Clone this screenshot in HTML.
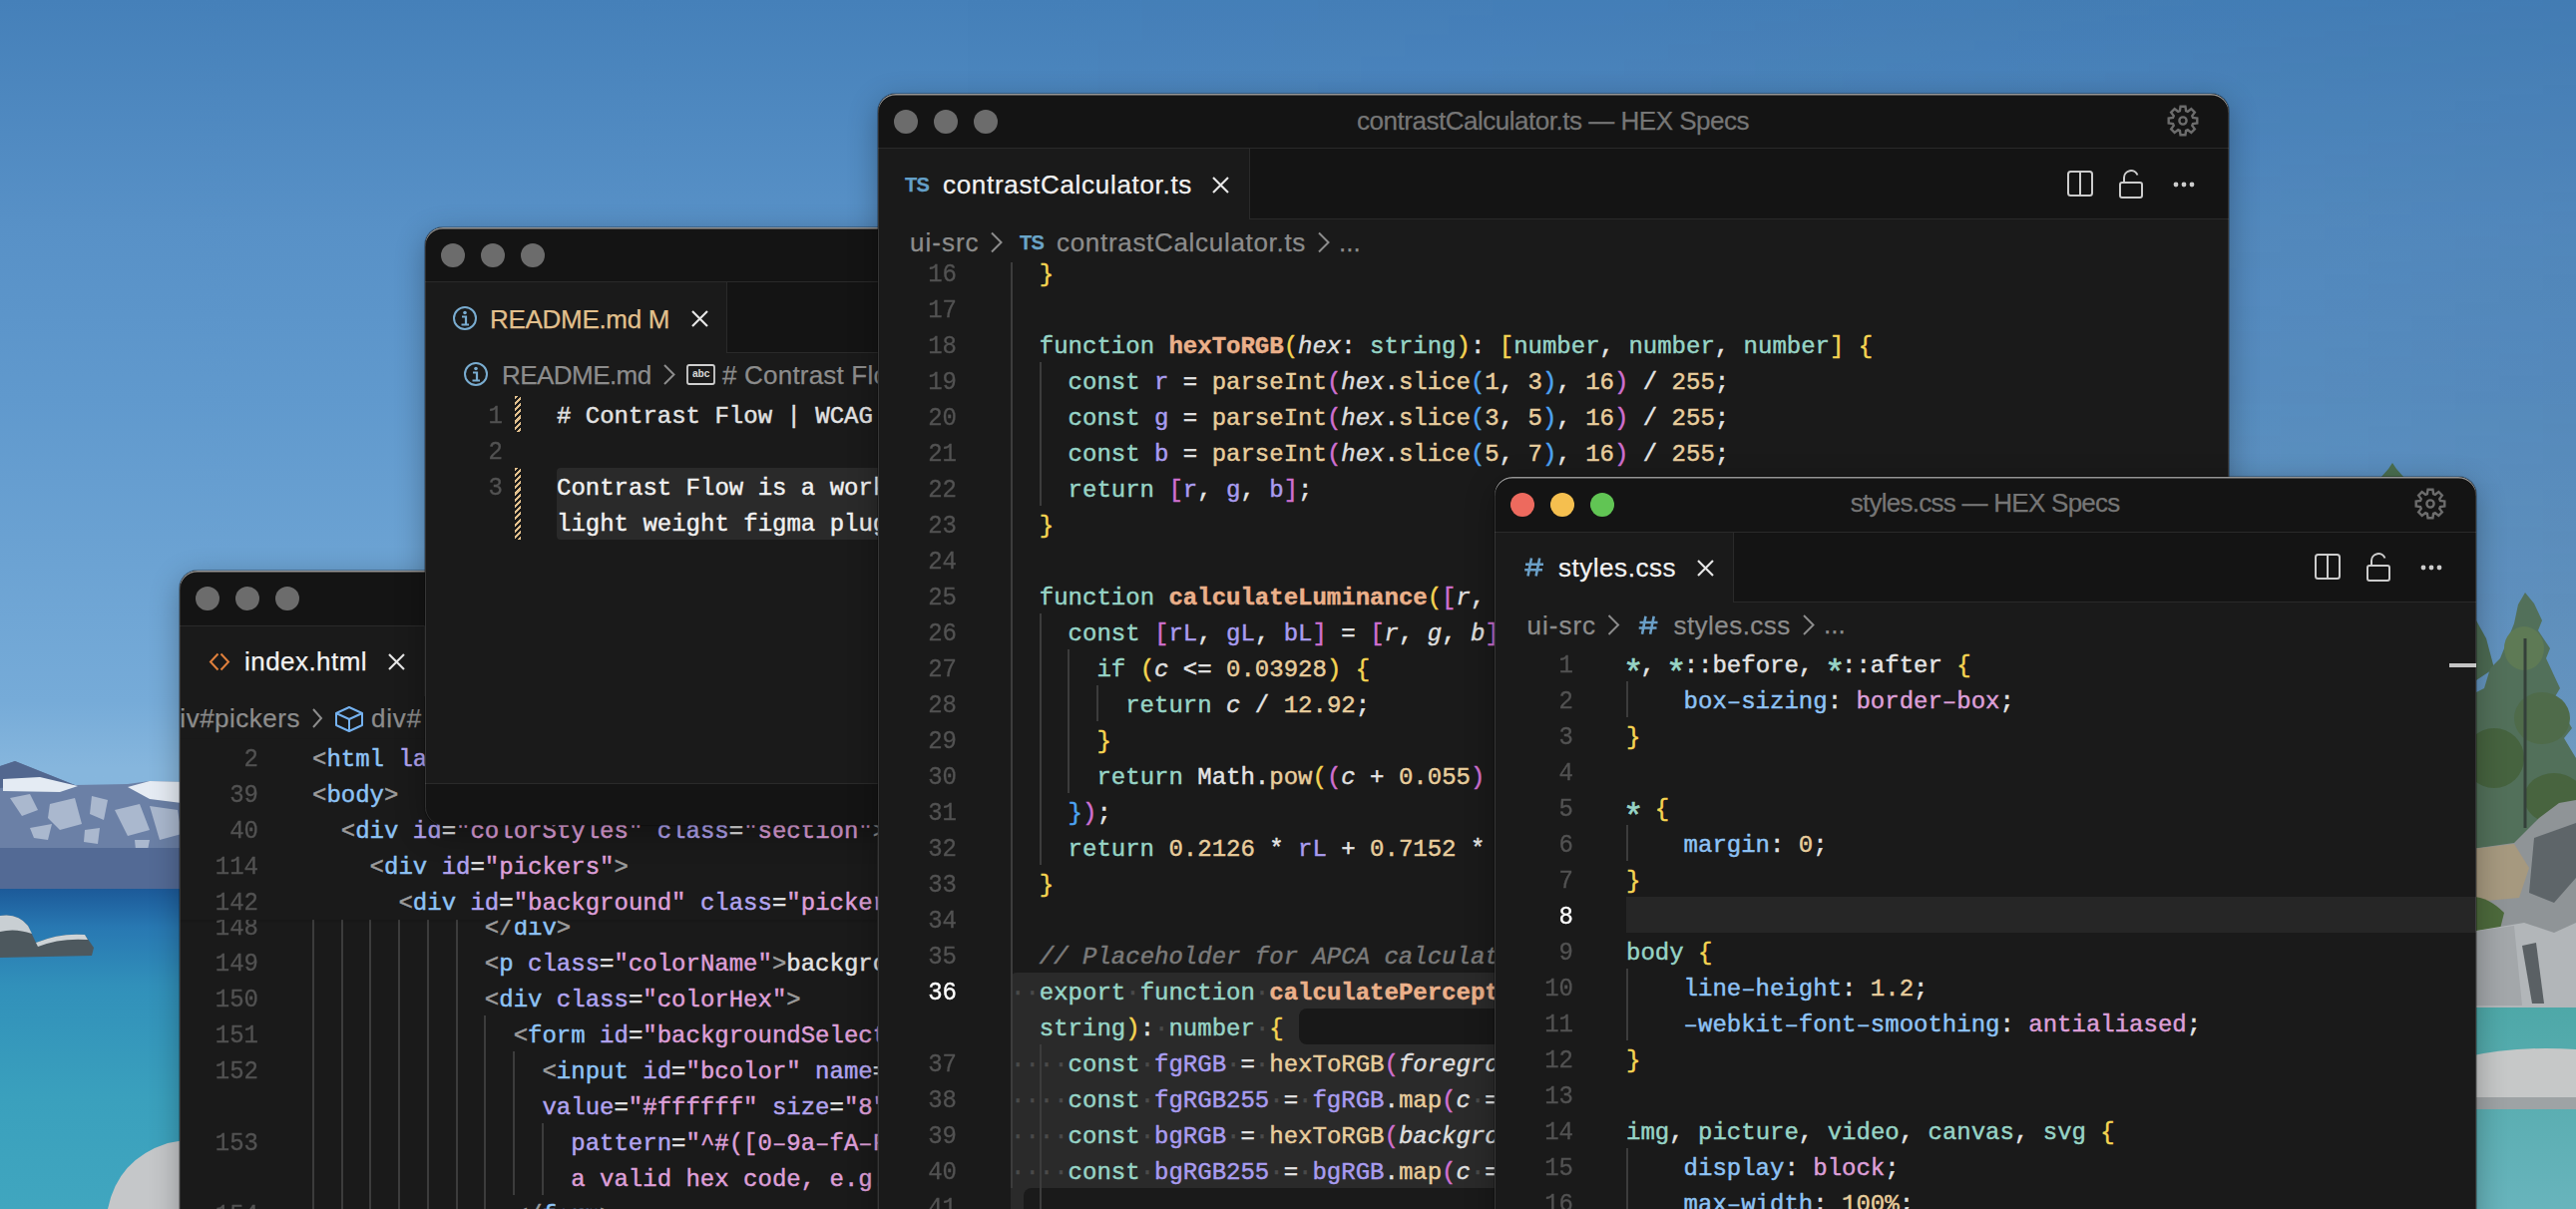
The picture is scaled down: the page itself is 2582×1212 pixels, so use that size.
<!DOCTYPE html>
<html><head><meta charset="utf-8"><style>
*{margin:0;padding:0;box-sizing:border-box}
html,body{width:2582px;height:1212px;overflow:hidden;background:#4a86be}
body{position:relative;font-family:"Liberation Sans", sans-serif}
.bg{position:absolute;left:0;top:0;width:2582px;height:1212px}
.win{position:absolute;border-radius:18px;overflow:hidden;background:#1a1a1a;
  box-shadow:0 0 0 1px rgba(0,0,0,0.25), 0 8px 30px rgba(0,0,0,0.30);}
.win::after{content:"";position:absolute;left:0;top:0;right:0;bottom:0;border-radius:18px;z-index:50;
  box-shadow:inset 0 1.5px 0 rgba(255,255,255,0.55), inset 1px 0 0 rgba(255,255,255,0.12), inset -1px 0 0 rgba(255,255,255,0.12);pointer-events:none}
.abs{position:absolute}
.title{position:absolute;left:0;top:0;right:0;background:#141414;border-bottom:1px solid #282828}
.tl{position:absolute;width:24px;height:24px;border-radius:12px;background:#6c6c6c}
.tabbar{position:absolute;left:0;right:0;background:#141414;border-bottom:1px solid #282828}
.tab{position:absolute;left:0;top:0;bottom:-1px;background:#1a1a1a;border-right:1px solid #282828}
.ui{position:absolute;white-space:pre;font-family:"Liberation Sans", sans-serif;font-size:26px;line-height:30px;-webkit-text-stroke:0.25px currentColor}
.code{position:absolute;white-space:pre;font-family:"Liberation Mono", monospace;font-size:24px;line-height:36px;color:#e4e4e4;-webkit-text-stroke:0.45px currentColor}
.ast{display:inline-block;transform:scale(1.35) translateY(3px)}
.ln{position:absolute;white-space:pre;font-family:"Liberation Mono", monospace;font-size:24px;line-height:36px;color:#555;text-align:right;-webkit-text-stroke:0.3px currentColor;transform:scaleY(1.1);transform-origin:50% 26px}
.g{position:absolute;width:1.5px;background:#3c3c3c}
.k{color:#97d4c6} .ka{color:#97d4c6;display:inline-block;transform:translateY(9.5px) scale(1.45)} .fn{color:#ebb08a;font-weight:bold} .m{color:#e8cd9c} .v{color:#a99cf0}
.p{color:#dedede;font-style:italic} .y{color:#f5d452} .pu{color:#d070d0} .bl{color:#4da3f2}
.n{color:#e8cd9c} .o{color:#e4e4e4} .cm{color:#7a7a7a;font-style:italic}
.tg{color:#9c9c9c} .tn{color:#8ec3f5} .an{color:#b2a4f0} .sv{color:#dd9fd8}
.pr{color:#8ec3f5} .ws{color:#4a4a4a}

.mh{color:#e2e2e2} .mt{color:#f0f0f0}
</style></head>
<body>
<svg class="bg" width="2582" height="1212" viewBox="0 0 2582 1212">
<defs>
<linearGradient id="sky" x1="0" y1="0" x2="0" y2="1">
<stop offset="0" stop-color="#4580b9"/><stop offset="0.19" stop-color="#5891c7"/><stop offset="0.33" stop-color="#6099cd"/><stop offset="0.58" stop-color="#76abd8"/><stop offset="0.635" stop-color="#86b6dd"/><stop offset="1" stop-color="#88b8de"/>
</linearGradient>
<linearGradient id="waterL" x1="0" y1="0" x2="0" y2="1">
<stop offset="0" stop-color="#1c5a99"/><stop offset="0.12" stop-color="#2878b2"/><stop offset="0.3" stop-color="#3190ba"/><stop offset="0.65" stop-color="#3aa0bd"/><stop offset="1" stop-color="#40a6bf"/>
</linearGradient>
<linearGradient id="waterR" x1="0" y1="0" x2="0" y2="1">
<stop offset="0" stop-color="#4ea8a8"/><stop offset="1" stop-color="#68b4bc"/>
</linearGradient>
<linearGradient id="skyR" x1="0" y1="0" x2="1" y2="0"><stop offset="0" stop-color="#001030" stop-opacity="0"/><stop offset="0.35" stop-color="#001030" stop-opacity="0"/><stop offset="1" stop-color="#001030" stop-opacity="0.15"/></linearGradient>
<linearGradient id="skyMG" x1="0" y1="0" x2="0" y2="1"><stop offset="0" stop-color="#fff" stop-opacity="0.25"/><stop offset="0.5" stop-color="#fff" stop-opacity="1"/><stop offset="1" stop-color="#fff" stop-opacity="1"/></linearGradient>
<mask id="skyM"><rect width="2582" height="1212" fill="url(#skyMG)"/></mask>
</defs>
<rect width="2582" height="1212" fill="url(#sky)"/>
<rect width="2582" height="1212" fill="url(#skyR)" mask="url(#skyM)"/>
<!-- left mountains -->
<polygon points="0,768 15,763 75,787 128,786 150,783 190,784 190,892 0,892" fill="#6b80a6"/>
<polygon points="0,768 15,763 75,787 40,786 0,790" fill="#52678f"/>
<polygon points="3,781 40,779 78,788 60,794 3,793" fill="#e4ebf3"/>
<polygon points="128,789 150,783 190,784 190,806 150,801" fill="#e6ecf4"/>
<g fill="#dfe6ef" opacity="0.55">
<path d="M10,800 L30,796 L38,812 L22,818 Z"/><path d="M50,806 L75,800 L82,826 L60,832 L48,820 Z"/><path d="M92,798 L108,802 L104,822 L90,816 Z"/>
<path d="M115,812 L140,806 L150,832 L128,838 Z"/><path d="M150,808 L178,812 L182,836 L160,842 Z"/><path d="M30,830 L52,826 L48,842 L34,840 Z"/>
<path d="M85,832 L100,830 L98,846 L84,844 Z"/><path d="M135,842 L150,842 L148,852 L136,852 Z"/>
</g>
<rect x="0" y="850" width="190" height="42" fill="#536a95"/>
<rect x="0" y="891" width="190" height="321" fill="url(#waterL)"/>
<path d="M0,918 Q18,915 28,928 L36,945 Q60,935 85,937 L94,950 L92,958 L0,960 Z" fill="#4d585e"/>
<path d="M0,918 Q18,915 28,928 L32,936 Q15,930 0,934 Z" fill="#c9cfd3"/>
<path d="M36,945 Q60,935 85,937 L88,942 Q60,940 38,949 Z" fill="#cdd3d6"/>
<path d="M108,1212 Q118,1162 168,1146 L190,1142 L190,1212 Z" fill="#c5c7c9"/>
<!-- right side -->
<rect x="2470" y="1010" width="112" height="202" fill="url(#waterR)"/>
<g>
<path d="M2470,630 L2482,622 L2492,640 L2500,670 L2470,690 Z" fill="#4c6a52"/>
<path d="M2531,594 L2540,605 L2548,622 L2544,632 L2556,650 L2552,660 L2566,690 L2560,700 L2578,730 L2570,740 L2582,760 L2582,860 L2470,860 L2470,700 L2490,690 L2496,670 L2506,660 L2514,640 L2520,625 L2524,606 Z" fill="#52705a"/>
<ellipse cx="2530" cy="650" rx="20" ry="22" fill="#5e7a55"/>
<ellipse cx="2548" cy="720" rx="28" ry="26" fill="#4f6b4a"/>
<ellipse cx="2500" cy="760" rx="30" ry="30" fill="#46633f"/>
<ellipse cx="2560" cy="800" rx="30" ry="25" fill="#48643f"/>
<rect x="2529.5" y="640" width="3" height="190" fill="#34403a"/>
</g>
<path d="M2470,852 L2520,845 L2545,820 L2565,805 L2582,802 L2582,1010 L2470,1010 Z" fill="#8f9497"/>
<path d="M2470,852 L2520,846 L2535,870 L2525,900 L2470,905 Z" fill="#a6997f"/>
<path d="M2470,900 Q2490,895 2510,915 L2505,935 L2470,935 Z" fill="#4d6a3c"/>
<path d="M2540,840 L2582,825 L2582,880 L2560,905 L2535,895 Z" fill="#5e6569"/>
<path d="M2470,935 L2530,925 L2560,935 L2582,925 L2582,1010 L2470,1010 Z" fill="#b2b6b9"/>
<path d="M2470,935 L2520,928 L2528,1008 L2470,1008 Z" fill="#a3a7aa"/>
<path d="M2528,948 L2538,1006 L2550,1006 L2542,945 Z" fill="#5a6064"/>
<path d="M2470,1060 Q2520,1048 2582,1052 L2582,1112 L2470,1112 Z" fill="#c6c8c8"/>
<path d="M2470,1100 L2582,1100 L2582,1112 L2470,1112 Z" fill="#9ea3a5"/>
<path d="M2386,479 L2394,470 L2398,464 L2402,470 L2410,479 Z" fill="#4a6e50"/>
</svg><div class="win" style="left:880px;top:94px;width:1354px;height:1200px;z-index:3"><div class="abs" style="left:-880px;top:-94px;width:2582px;height:1212px"><div class="abs" style="left:880px;top:94px;width:1354px;height:55px;background:#141414;border-bottom:1px solid #2a2a2a"></div><div class="tl" style="left:896px;top:110px"></div><div class="tl" style="left:936px;top:110px"></div><div class="tl" style="left:976px;top:110px"></div><div class="ui" style="left:1360px;top:106.0px;font-size:26px;line-height:31px;color:#767676;letter-spacing:-0.48px;">contrastCalculator.ts — HEX Specs</div><svg class="abs" style="left:0;top:0" width="2582" height="1212"><polygon points="2184.91,111.03 2185.55,106.71 2190.45,106.71 2191.09,111.03 2192.87,111.77 2196.37,109.16 2199.84,112.63 2197.23,116.13 2197.97,117.91 2202.29,118.55 2202.29,123.45 2197.97,124.09 2197.23,125.87 2199.84,129.37 2196.37,132.84 2192.87,130.23 2191.09,130.97 2190.45,135.29 2185.55,135.29 2184.91,130.97 2183.13,130.23 2179.63,132.84 2176.16,129.37 2178.77,125.87 2178.03,124.09 2173.71,123.45 2173.71,118.55 2178.03,117.91 2178.77,116.13 2176.16,112.63 2179.63,109.16 2183.13,111.77" fill="none" stroke="#6c6c6c" stroke-width="2.4" stroke-linejoin="miter"/><circle cx="2188" cy="121" r="3.6" fill="none" stroke="#6c6c6c" stroke-width="2.4"/></svg><div class="abs" style="left:880px;top:149px;width:1354px;height:71px;background:#141414;border-bottom:1px solid #2a2a2a"></div><div class="abs" style="left:880px;top:149px;width:373px;height:71px;background:#1a1a1a;border-right:1px solid #2a2a2a"></div><div class="ui" style="left:907px;top:173.1px;font-size:20px;line-height:24px;color:#64a0c8;letter-spacing:-0.8px;font-weight:bold">TS</div><div class="ui" style="left:945px;top:169.7px;font-size:26px;line-height:31px;color:#f2f2f2;letter-spacing:0.69px;">contrastCalculator.ts</div><svg class="abs" style="left:1214.0px;top:175.5px" width="19" height="19" viewBox="-9.5 -9.5 19 19"><path d="M-7.5,-7.5 L7.5,7.5 M7.5,-7.5 L-7.5,7.5" stroke="#e6e6e6" stroke-width="2.2" fill="none"/></svg><svg class="abs" style="left:2070px;top:169px" width="140" height="34" viewBox="2070 169 140 34"><rect x="2073" y="172" width="24" height="24" rx="2.5" fill="none" stroke="#cccccc" stroke-width="2"/><line x1="2085" y1="172" x2="2085" y2="196" stroke="#cccccc" stroke-width="2"/><rect x="2125" y="183" width="22" height="15" rx="2" fill="none" stroke="#cccccc" stroke-width="2"/><path d="M2129,183 V178 A7,7 0 0 1 2142.5,175.5" fill="none" stroke="#cccccc" stroke-width="2"/><circle cx="2181" cy="185" r="2.4" fill="#cccccc"/><circle cx="2189" cy="185" r="2.4" fill="#cccccc"/><circle cx="2197" cy="185" r="2.4" fill="#cccccc"/></svg><div class="ui" style="left:912px;top:227.5px;font-size:26px;line-height:31px;color:#8c8c8c;letter-spacing:1.0px;">ui-src</div><svg class="abs" style="left:0;top:0" width="2582" height="1212"><path d="M994,233.5 L1003.5,243.0 L994,252.5" stroke="#8c8c8c" stroke-width="2" fill="none"/></svg><svg class="abs" style="left:0;top:0" width="2582" height="1212"><path d="M1322,233.5 L1331.5,243.0 L1322,252.5" stroke="#8c8c8c" stroke-width="2" fill="none"/></svg><div class="ui" style="left:1022px;top:230.6px;font-size:20px;line-height:24px;color:#6aa5c8;letter-spacing:-0.8px;font-weight:bold">TS</div><div class="ui" style="left:1059px;top:227.5px;font-size:26px;line-height:31px;color:#8c8c8c;letter-spacing:0.69px;">contrastCalculator.ts</div><div class="ui" style="left:1342px;top:227.5px;font-size:26px;line-height:31px;color:#8c8c8c;letter-spacing:0px;">...</div><div class="abs" style="left:880px;top:263px;width:1354px;height:1000px;overflow:hidden"><div class="abs" style="left:-880px;top:-263px;width:2582px;height:1212px"><div class="abs" style="left:1013px;top:975px;width:1221px;height:252px;background:#2a2a2a;border-radius:6px 0 0 6px"></div><div class="abs" style="left:1302px;top:1011px;width:932px;height:36px;background:#181818;border-radius:8px 0 0 8px"></div><div class="abs" style="left:1026px;top:1191px;width:1208px;height:36px;background:#1a1a1a;border-radius:8px 0 0 0"></div><div class="g" style="left:1013px;top:255px;height:936px"></div><div class="g" style="left:1042px;top:363px;height:144px"></div><div class="g" style="left:1042px;top:615px;height:252px"></div><div class="g" style="left:1070px;top:651px;height:144px"></div><div class="g" style="left:1099px;top:687px;height:36px"></div><div class="g" style="left:1042px;top:1047px;height:180px"></div><div class="ln" style="left:759px;width:200px;top:258px;color:#525252">16</div><div class="ln" style="left:759px;width:200px;top:294px;color:#525252">17</div><div class="ln" style="left:759px;width:200px;top:330px;color:#525252">18</div><div class="ln" style="left:759px;width:200px;top:366px;color:#525252">19</div><div class="ln" style="left:759px;width:200px;top:402px;color:#525252">20</div><div class="ln" style="left:759px;width:200px;top:438px;color:#525252">21</div><div class="ln" style="left:759px;width:200px;top:474px;color:#525252">22</div><div class="ln" style="left:759px;width:200px;top:510px;color:#525252">23</div><div class="ln" style="left:759px;width:200px;top:546px;color:#525252">24</div><div class="ln" style="left:759px;width:200px;top:582px;color:#525252">25</div><div class="ln" style="left:759px;width:200px;top:618px;color:#525252">26</div><div class="ln" style="left:759px;width:200px;top:654px;color:#525252">27</div><div class="ln" style="left:759px;width:200px;top:690px;color:#525252">28</div><div class="ln" style="left:759px;width:200px;top:726px;color:#525252">29</div><div class="ln" style="left:759px;width:200px;top:762px;color:#525252">30</div><div class="ln" style="left:759px;width:200px;top:798px;color:#525252">31</div><div class="ln" style="left:759px;width:200px;top:834px;color:#525252">32</div><div class="ln" style="left:759px;width:200px;top:870px;color:#525252">33</div><div class="ln" style="left:759px;width:200px;top:906px;color:#525252">34</div><div class="ln" style="left:759px;width:200px;top:942px;color:#525252">35</div><div class="ln" style="left:759px;width:200px;top:978px;color:#ffffff">36</div><div class="ln" style="left:759px;width:200px;top:1050px;color:#525252">37</div><div class="ln" style="left:759px;width:200px;top:1086px;color:#525252">38</div><div class="ln" style="left:759px;width:200px;top:1122px;color:#525252">39</div><div class="ln" style="left:759px;width:200px;top:1158px;color:#525252">40</div><div class="ln" style="left:759px;width:200px;top:1194px;color:#525252">41</div><div class="code" style="left:1013px;top:258px">  <span class="y">}</span></div><div class="code" style="left:1013px;top:294px"></div><div class="code" style="left:1013px;top:330px">  <span class="k">function</span> <span class="fn">hexToRGB</span><span class="y">(</span><span class="p">hex</span>: <span class="k">string</span><span class="y">)</span>: <span class="y">[</span><span class="k">number</span>, <span class="k">number</span>, <span class="k">number</span><span class="y">]</span> <span class="y">{</span></div><div class="code" style="left:1013px;top:366px">    <span class="k">const</span> <span class="v">r</span> = <span class="m">parseInt</span><span class="pu">(</span><span class="p">hex</span>.<span class="m">slice</span><span class="bl">(</span><span class="n">1</span>, <span class="n">3</span><span class="bl">)</span>, <span class="n">16</span><span class="pu">)</span> / <span class="n">255</span>;</div><div class="code" style="left:1013px;top:402px">    <span class="k">const</span> <span class="v">g</span> = <span class="m">parseInt</span><span class="pu">(</span><span class="p">hex</span>.<span class="m">slice</span><span class="bl">(</span><span class="n">3</span>, <span class="n">5</span><span class="bl">)</span>, <span class="n">16</span><span class="pu">)</span> / <span class="n">255</span>;</div><div class="code" style="left:1013px;top:438px">    <span class="k">const</span> <span class="v">b</span> = <span class="m">parseInt</span><span class="pu">(</span><span class="p">hex</span>.<span class="m">slice</span><span class="bl">(</span><span class="n">5</span>, <span class="n">7</span><span class="bl">)</span>, <span class="n">16</span><span class="pu">)</span> / <span class="n">255</span>;</div><div class="code" style="left:1013px;top:474px">    <span class="k">return</span> <span class="pu">[</span><span class="v">r</span>, <span class="v">g</span>, <span class="v">b</span><span class="pu">]</span>;</div><div class="code" style="left:1013px;top:510px">  <span class="y">}</span></div><div class="code" style="left:1013px;top:546px"></div><div class="code" style="left:1013px;top:582px">  <span class="k">function</span> <span class="fn">calculateLuminance</span><span class="y">(</span><span class="pu">[</span><span class="p">r</span>, <span class="p">g</span>, <span class="p">b</span><span class="pu">]</span>: <span class="pu">[</span><span class="k">number</span>, <span class="k">number</span>, <span class="k">number</span><span class="pu">]</span><span class="y">)</span>: <span class="k">number</span> <span class="y">{</span></div><div class="code" style="left:1013px;top:618px">    <span class="k">const</span> <span class="pu">[</span><span class="v">rL</span>, <span class="v">gL</span>, <span class="v">bL</span><span class="pu">]</span> = <span class="pu">[</span><span class="p">r</span>, <span class="p">g</span>, <span class="p">b</span><span class="pu">]</span>.<span class="m">map</span><span class="pu">(</span><span class="p">c</span> =&gt; <span class="bl">{</span></div><div class="code" style="left:1013px;top:654px">      <span class="k">if</span> <span class="y">(</span><span class="p">c</span> &lt;= <span class="n">0.03928</span><span class="y">)</span> <span class="y">{</span></div><div class="code" style="left:1013px;top:690px">        <span class="k">return</span> <span class="p">c</span> / <span class="n">12.92</span>;</div><div class="code" style="left:1013px;top:726px">      <span class="y">}</span></div><div class="code" style="left:1013px;top:762px">      <span class="k">return</span> Math.<span class="m">pow</span><span class="y">(</span><span class="pu">(</span><span class="p">c</span> + <span class="n">0.055</span><span class="pu">)</span> / <span class="n">1.055</span>, <span class="n">2.4</span><span class="y">)</span>;</div><div class="code" style="left:1013px;top:798px">    <span class="bl">}</span><span class="pu">)</span>;</div><div class="code" style="left:1013px;top:834px">    <span class="k">return</span> <span class="n">0.2126</span> * <span class="v">rL</span> + <span class="n">0.7152</span> * <span class="v">gL</span> + <span class="n">0.0722</span> * <span class="v">bL</span>;</div><div class="code" style="left:1013px;top:870px">  <span class="y">}</span></div><div class="code" style="left:1013px;top:906px"></div><div class="code" style="left:1013px;top:942px">  <span class="cm">// Placeholder for APCA calculation</span></div><div class="code" style="left:1013px;top:978px"><span class="ws">··</span><span class="k">export</span><span class="ws">·</span><span class="k">function</span><span class="ws">·</span><span class="fn">calculatePerceptualContrast</span><span class="y">(</span><span class="p">foreground</span>:<span class="ws">·</span><span class="k">string</span>,<span class="ws">·</span><span class="p">background</span>:</div><div class="code" style="left:1013px;top:1014px">  <span class="k">string</span><span class="y">)</span>:<span class="ws">·</span><span class="k">number</span><span class="ws">·</span><span class="y">{</span></div><div class="code" style="left:1013px;top:1050px"><span class="ws">····</span><span class="k">const</span><span class="ws">·</span><span class="v">fgRGB</span><span class="ws">·</span>=<span class="ws">·</span><span class="m">hexToRGB</span><span class="pu">(</span><span class="p">foreground</span><span class="pu">)</span>;</div><div class="code" style="left:1013px;top:1086px"><span class="ws">····</span><span class="k">const</span><span class="ws">·</span><span class="v">fgRGB255</span><span class="ws">·</span>=<span class="ws">·</span><span class="v">fgRGB</span>.<span class="m">map</span><span class="pu">(</span><span class="p">c</span><span class="ws">·</span>=&gt;<span class="ws">·</span><span class="p">c</span><span class="ws">·</span>*<span class="ws">·</span><span class="n">255</span><span class="pu">)</span>;</div><div class="code" style="left:1013px;top:1122px"><span class="ws">····</span><span class="k">const</span><span class="ws">·</span><span class="v">bgRGB</span><span class="ws">·</span>=<span class="ws">·</span><span class="m">hexToRGB</span><span class="pu">(</span><span class="p">background</span><span class="pu">)</span>;</div><div class="code" style="left:1013px;top:1158px"><span class="ws">····</span><span class="k">const</span><span class="ws">·</span><span class="v">bgRGB255</span><span class="ws">·</span>=<span class="ws">·</span><span class="v">bgRGB</span>.<span class="m">map</span><span class="pu">(</span><span class="p">c</span><span class="ws">·</span>=&gt;<span class="ws">·</span><span class="p">c</span><span class="ws">·</span>*<span class="ws">·</span><span class="n">255</span><span class="pu">)</span>;</div><div class="code" style="left:1013px;top:1194px"></div></div></div></div></div><div class="win" style="left:426px;top:228px;width:600px;height:599px;z-index:2"><div class="abs" style="left:-426px;top:-228px;width:2582px;height:1212px"><div class="abs" style="left:426px;top:228px;width:600px;height:55px;background:#141414;border-bottom:1px solid #2a2a2a"></div><div class="tl" style="left:442px;top:244px"></div><div class="tl" style="left:482px;top:244px"></div><div class="tl" style="left:522px;top:244px"></div><div class="abs" style="left:426px;top:283px;width:600px;height:71px;background:#141414;border-bottom:1px solid #2a2a2a"></div><div class="abs" style="left:426px;top:283px;width:303px;height:71px;background:#1a1a1a;border-right:1px solid #2a2a2a"></div><svg class="abs" style="left:451.5px;top:304.5px" width="28" height="28" viewBox="-14 -14 28 28"><circle r="11" fill="none" stroke="#79acd0" stroke-width="2"/><circle cx="0" cy="-5.5" r="1.8" fill="#79acd0"/><path d="M-3,-1.5 H1 V6 M-3.5,6.5 H4" stroke="#79acd0" stroke-width="2.2" fill="none"/></svg><div class="ui" style="left:491px;top:304.5px;font-size:26px;line-height:31px;color:#e2c08d;letter-spacing:-0.3px;">README.md M</div><svg class="abs" style="left:692.0px;top:309.5px" width="19" height="19" viewBox="-9.5 -9.5 19 19"><path d="M-7.5,-7.5 L7.5,7.5 M7.5,-7.5 L-7.5,7.5" stroke="#e6e6e6" stroke-width="2.2" fill="none"/></svg><svg class="abs" style="left:463px;top:361px" width="28" height="28" viewBox="-14 -14 28 28"><circle r="11" fill="none" stroke="#79acd0" stroke-width="2"/><circle cx="0" cy="-5.5" r="1.8" fill="#79acd0"/><path d="M-3,-1.5 H1 V6 M-3.5,6.5 H4" stroke="#79acd0" stroke-width="2.2" fill="none"/></svg><div class="ui" style="left:503px;top:360.5px;font-size:26px;line-height:31px;color:#8c8c8c;letter-spacing:-0.55px;">README.md</div><svg class="abs" style="left:0;top:0" width="2582" height="1212"><path d="M666,366 L675.5,375.5 L666,385" stroke="#8c8c8c" stroke-width="2" fill="none"/></svg><svg class="abs" style="left:0;top:0" width="2582" height="1212"><rect x="689" y="366" width="27" height="19" rx="2" fill="none" stroke="#cfcfcf" stroke-width="1.8"/></svg><div class="abs" style="left:689px;top:366px;width:27px;text-align:center;font-family:'Liberation Mono',monospace;font-weight:bold;font-size:10.5px;line-height:19px;color:#d6d6d6;letter-spacing:-0.5px">abc</div><div class="ui" style="left:724px;top:360.5px;font-size:26px;line-height:31px;color:#8c8c8c;letter-spacing:0.2px;"># Contrast Flow</div><div class="abs" style="left:558px;top:469px;width:400px;height:72px;background:#2a2a2a;border-radius:4px 0 0 4px"></div><div class="ln" style="left:304px;width:200px;top:400px;color:#525252">1</div><div class="ln" style="left:304px;width:200px;top:436px;color:#525252">2</div><div class="ln" style="left:304px;width:200px;top:472px;color:#525252">3</div><div class="abs" style="left:516px;top:397px;width:6px;height:36px;background:repeating-linear-gradient(135deg,#e2c08d 0 2.2px,transparent 2.2px 4.4px);"></div><div class="abs" style="left:516px;top:469px;width:6px;height:72px;background:repeating-linear-gradient(135deg,#e2c08d 0 2.2px,transparent 2.2px 4.4px);"></div><div class="code" style="left:558px;top:400px"><span class="mh"># Contrast Flow | WCAG AA/AAA</span></div><div class="code" style="left:558px;top:436px"></div><div class="code" style="left:558px;top:472px"><span class="mt">Contrast Flow is a work in progress</span></div><div class="code" style="left:558px;top:508px"><span class="mt">light weight figma plugin</span></div><div class="abs" style="left:426px;top:785px;width:600px;height:42px;background:#141414;border-top:1px solid #2a2a2a"></div></div></div><div class="win" style="left:180px;top:572px;width:700px;height:700px;z-index:1"><div class="abs" style="left:-180px;top:-572px;width:2582px;height:1212px"><div class="abs" style="left:180px;top:572px;width:700px;height:56px;background:#141414;border-bottom:1px solid #2a2a2a"></div><div class="tl" style="left:196px;top:588px"></div><div class="tl" style="left:236px;top:588px"></div><div class="tl" style="left:276px;top:588px"></div><div class="abs" style="left:180px;top:628px;width:700px;height:70px;background:#141414;border-bottom:1px solid #2a2a2a"></div><div class="abs" style="left:180px;top:628px;width:246px;height:70px;background:#1a1a1a;border-right:1px solid #2a2a2a"></div><svg class="abs" style="left:0;top:0" width="2582" height="1212"><path d="M218.5,655.5 L211,663.5 L218.5,671.5 M221.5,655.5 L229,663.5 L221.5,671.5" stroke="#e0803c" stroke-width="2" fill="none"/></svg><div class="ui" style="left:245px;top:647.5px;font-size:26px;line-height:31px;color:#f2f2f2;letter-spacing:0.45px;">index.html</div><svg class="abs" style="left:388.0px;top:653.5px" width="19" height="19" viewBox="-9.5 -9.5 19 19"><path d="M-7.5,-7.5 L7.5,7.5 M7.5,-7.5 L-7.5,7.5" stroke="#e6e6e6" stroke-width="2.2" fill="none"/></svg><div class="g" style="left:313px;top:910px;height:324px"></div><div class="g" style="left:342px;top:910px;height:324px"></div><div class="g" style="left:370px;top:910px;height:324px"></div><div class="g" style="left:399px;top:910px;height:324px"></div><div class="g" style="left:428px;top:910px;height:324px"></div><div class="g" style="left:457px;top:910px;height:324px"></div><div class="g" style="left:485px;top:1018px;height:216px"></div><div class="g" style="left:514px;top:1054px;height:144px"></div><div class="g" style="left:543px;top:1126px;height:72px"></div><div class="code" style="left:313px;top:913px">            <span class="tg">&lt;/</span><span class="tn">div</span><span class="tg">&gt;</span></div><div class="code" style="left:313px;top:949px">            <span class="tg">&lt;</span><span class="tn">p</span> <span class="an">class</span>=<span class="sv">&quot;colorName&quot;</span><span class="tg">&gt;</span>background<span class="tg">&lt;/</span><span class="tn">p</span><span class="tg">&gt;</span></div><div class="code" style="left:313px;top:985px">            <span class="tg">&lt;</span><span class="tn">div</span> <span class="an">class</span>=<span class="sv">&quot;colorHex&quot;</span><span class="tg">&gt;</span></div><div class="code" style="left:313px;top:1021px">              <span class="tg">&lt;</span><span class="tn">form</span> <span class="an">id</span>=<span class="sv">&quot;backgroundSelector&quot;</span><span class="tg">&gt;</span></div><div class="code" style="left:313px;top:1057px">                <span class="tg">&lt;</span><span class="tn">input</span> <span class="an">id</span>=<span class="sv">&quot;bcolor&quot;</span> <span class="an">name</span>=<span class="sv">&quot;bcolor&quot;</span></div><div class="code" style="left:313px;top:1093px">                <span class="an">value</span>=<span class="sv">&quot;#ffffff&quot;</span> <span class="an">size</span>=<span class="sv">&quot;8&quot;</span></div><div class="code" style="left:313px;top:1129px">                  <span class="an">pattern</span>=<span class="sv">&quot;^#([0–9a–fA–F]{6})$&quot;</span></div><div class="code" style="left:313px;top:1165px">                  <span class="sv">a valid hex code, e.g. #ffffff&quot;</span></div><div class="code" style="left:313px;top:1201px">              <span class="tg">&lt;/</span><span class="tn">form</span><span class="tg">&gt;</span></div><div class="ln" style="left:59px;width:200px;top:913px;color:#525252">148</div><div class="ln" style="left:59px;width:200px;top:949px;color:#525252">149</div><div class="ln" style="left:59px;width:200px;top:985px;color:#525252">150</div><div class="ln" style="left:59px;width:200px;top:1021px;color:#525252">151</div><div class="ln" style="left:59px;width:200px;top:1057px;color:#525252">152</div><div class="ln" style="left:59px;width:200px;top:1129px;color:#525252">153</div><div class="ln" style="left:59px;width:200px;top:1201px;color:#525252">154</div><div class="abs" style="left:180px;top:741px;width:700px;height:181px;background:#1a1a1a;box-shadow:0 1px 2px rgba(0,0,0,0.15)"></div><div class="ui" style="left:165.4px;top:705.0px;font-size:26px;line-height:31px;color:#8c8c8c;letter-spacing:0.5px;">div#pickers</div><svg class="abs" style="left:0;top:0" width="2582" height="1212"><path d="M314,711 L322,720 L314,729" stroke="#8c8c8c" stroke-width="2" fill="none"/><path d="M337,715 L350,709 L363,715 L363,727 L350,733 L337,727 Z M337,715 L350,721 L363,715 M350,721 L350,733" stroke="#75b2f0" stroke-width="2" fill="none" stroke-linejoin="round"/></svg><div class="ui" style="left:372px;top:705.0px;font-size:26px;line-height:31px;color:#8c8c8c;letter-spacing:0.8px;">div#</div><div class="code" style="left:313px;top:743.5px"><span class="tg">&lt;</span><span class="tn">html</span> <span class="an">lang</span>=<span class="sv">&quot;en&quot;</span><span class="tg">&gt;</span></div><div class="code" style="left:313px;top:779.5px"><span class="tg">&lt;</span><span class="tn">body</span><span class="tg">&gt;</span></div><div class="code" style="left:313px;top:815.5px">  <span class="tg">&lt;</span><span class="tn">div</span> <span class="an">id</span>=<span class="sv">&quot;colorStyles&quot;</span> <span class="an">class</span>=<span class="sv">&quot;section&quot;</span><span class="tg">&gt;</span></div><div class="code" style="left:313px;top:851.5px">    <span class="tg">&lt;</span><span class="tn">div</span> <span class="an">id</span>=<span class="sv">&quot;pickers&quot;</span><span class="tg">&gt;</span></div><div class="code" style="left:313px;top:887.5px">      <span class="tg">&lt;</span><span class="tn">div</span> <span class="an">id</span>=<span class="sv">&quot;background&quot;</span> <span class="an">class</span>=<span class="sv">&quot;picker&quot;</span><span class="tg">&gt;</span></div><div class="ln" style="left:59px;width:200px;top:743.5px;color:#525252">2</div><div class="ln" style="left:59px;width:200px;top:779.5px;color:#525252">39</div><div class="ln" style="left:59px;width:200px;top:815.5px;color:#525252">40</div><div class="ln" style="left:59px;width:200px;top:851.5px;color:#525252">114</div><div class="ln" style="left:59px;width:200px;top:887.5px;color:#525252">142</div></div></div><div class="win" style="left:1498px;top:478px;width:984px;height:800px;z-index:4"><div class="abs" style="left:-1498px;top:-478px;width:2582px;height:1212px"><div class="abs" style="left:1498px;top:478px;width:984px;height:56px;background:#141414;border-bottom:1px solid #2a2a2a"></div><div class="tl" style="left:1514px;top:494px;background:#ed6a5e"></div><div class="tl" style="left:1554px;top:494px;background:#f5bf4f"></div><div class="tl" style="left:1594px;top:494px;background:#61c554"></div><div class="ui" style="left:1854.8px;top:489.1px;font-size:26px;line-height:31px;color:#767676;letter-spacing:-0.74px;">styles.css — HEX Specs</div><svg class="abs" style="left:0;top:0" width="2582" height="1212"><polygon points="2432.91,495.03 2433.55,490.71 2438.45,490.71 2439.09,495.03 2440.87,495.77 2444.37,493.16 2447.84,496.63 2445.23,500.13 2445.97,501.91 2450.29,502.55 2450.29,507.45 2445.97,508.09 2445.23,509.87 2447.84,513.37 2444.37,516.84 2440.87,514.23 2439.09,514.97 2438.45,519.29 2433.55,519.29 2432.91,514.97 2431.13,514.23 2427.63,516.84 2424.16,513.37 2426.77,509.87 2426.03,508.09 2421.71,507.45 2421.71,502.55 2426.03,501.91 2426.77,500.13 2424.16,496.63 2427.63,493.16 2431.13,495.77" fill="none" stroke="#6c6c6c" stroke-width="2.4" stroke-linejoin="miter"/><circle cx="2436" cy="505" r="3.6" fill="none" stroke="#6c6c6c" stroke-width="2.4"/></svg><div class="abs" style="left:1498px;top:534px;width:984px;height:70px;background:#141414;border-bottom:1px solid #2a2a2a"></div><div class="abs" style="left:1498px;top:534px;width:240px;height:70px;background:#1a1a1a;border-right:1px solid #2a2a2a"></div><svg class="abs" style="left:0;top:0" width="2582" height="1212"><path d="M1535,559.5 L1531.5,577.5 M1543.2,559.5 L1539.6,577.5 M1529,565.7 H1547 M1528.2,571.2 H1546" stroke="#6a9fc7" stroke-width="2.6" fill="none"/></svg><div class="ui" style="left:1562px;top:553.5px;font-size:26px;line-height:31px;color:#f2f2f2;letter-spacing:0.53px;">styles.css</div><svg class="abs" style="left:1699.8px;top:559.7px" width="19" height="19" viewBox="-9.5 -9.5 19 19"><path d="M-7.5,-7.5 L7.5,7.5 M7.5,-7.5 L-7.5,7.5" stroke="#e6e6e6" stroke-width="2.2" fill="none"/></svg><svg class="abs" style="left:2318px;top:553px" width="140" height="34" viewBox="2318 553 140 34"><rect x="2321" y="556" width="24" height="24" rx="2.5" fill="none" stroke="#cccccc" stroke-width="2"/><line x1="2333" y1="556" x2="2333" y2="580" stroke="#cccccc" stroke-width="2"/><rect x="2373" y="567" width="22" height="15" rx="2" fill="none" stroke="#cccccc" stroke-width="2"/><path d="M2377,567 V562 A7,7 0 0 1 2390.5,559.5" fill="none" stroke="#cccccc" stroke-width="2"/><circle cx="2429" cy="569" r="2.4" fill="#cccccc"/><circle cx="2437" cy="569" r="2.4" fill="#cccccc"/><circle cx="2445" cy="569" r="2.4" fill="#cccccc"/></svg><div class="ui" style="left:1530.5px;top:611.8px;font-size:26px;line-height:31px;color:#8c8c8c;letter-spacing:1.0px;">ui-src</div><svg class="abs" style="left:0;top:0" width="2582" height="1212"><path d="M1612.5,617 L1622.0,626.5 L1612.5,636" stroke="#8c8c8c" stroke-width="2" fill="none"/></svg><svg class="abs" style="left:0;top:0" width="2582" height="1212"><path d="M1808,617 L1817.5,626.5 L1808,636" stroke="#8c8c8c" stroke-width="2" fill="none"/></svg><svg class="abs" style="left:0;top:0" width="2582" height="1212"><path d="M1649.5,617.8 L1646.0,635.8 M1657.7,617.8 L1654.1,635.8 M1643.5,624.0 H1661.5 M1642.7,629.5 H1660.5" stroke="#6a9fc7" stroke-width="2.6" fill="none"/></svg><div class="ui" style="left:1677.5px;top:611.8px;font-size:26px;line-height:31px;color:#8c8c8c;letter-spacing:0.45px;">styles.css</div><div class="ui" style="left:1828px;top:611.0px;font-size:26px;line-height:31px;color:#8c8c8c;letter-spacing:0px;">...</div><div class="abs" style="left:1630px;top:899px;width:852px;height:36px;background:#262626;"></div><div class="g" style="left:1630px;top:683px;height:36px"></div><div class="g" style="left:1630px;top:827px;height:36px"></div><div class="g" style="left:1630px;top:971px;height:72px"></div><div class="g" style="left:1630px;top:1151px;height:72px"></div><div class="ln" style="left:1377px;width:200px;top:650px;color:#525252">1</div><div class="ln" style="left:1377px;width:200px;top:686px;color:#525252">2</div><div class="ln" style="left:1377px;width:200px;top:722px;color:#525252">3</div><div class="ln" style="left:1377px;width:200px;top:758px;color:#525252">4</div><div class="ln" style="left:1377px;width:200px;top:794px;color:#525252">5</div><div class="ln" style="left:1377px;width:200px;top:830px;color:#525252">6</div><div class="ln" style="left:1377px;width:200px;top:866px;color:#525252">7</div><div class="ln" style="left:1377px;width:200px;top:902px;color:#ffffff">8</div><div class="ln" style="left:1377px;width:200px;top:938px;color:#525252">9</div><div class="ln" style="left:1377px;width:200px;top:974px;color:#525252">10</div><div class="ln" style="left:1377px;width:200px;top:1010px;color:#525252">11</div><div class="ln" style="left:1377px;width:200px;top:1046px;color:#525252">12</div><div class="ln" style="left:1377px;width:200px;top:1082px;color:#525252">13</div><div class="ln" style="left:1377px;width:200px;top:1118px;color:#525252">14</div><div class="ln" style="left:1377px;width:200px;top:1154px;color:#525252">15</div><div class="ln" style="left:1377px;width:200px;top:1190px;color:#525252">16</div><div class="code" style="left:1630px;top:650px"><span class="ka">*</span>, <span class="ka">*</span>::before, <span class="ka">*</span>::after <span class="y">{</span></div><div class="code" style="left:1630px;top:686px">    <span class="pr">box–sizing</span>: <span class="sv">border–box</span>;</div><div class="code" style="left:1630px;top:722px"><span class="y">}</span></div><div class="code" style="left:1630px;top:758px"></div><div class="code" style="left:1630px;top:794px"><span class="ka">*</span> <span class="y">{</span></div><div class="code" style="left:1630px;top:830px">    <span class="pr">margin</span>: <span class="n">0</span>;</div><div class="code" style="left:1630px;top:866px"><span class="y">}</span></div><div class="code" style="left:1630px;top:902px"></div><div class="code" style="left:1630px;top:938px"><span class="k">body</span> <span class="y">{</span></div><div class="code" style="left:1630px;top:974px">    <span class="pr">line–height</span>: <span class="n">1.2</span>;</div><div class="code" style="left:1630px;top:1010px">    <span class="pr">–webkit–font–smoothing</span>: <span class="sv">antialiased</span>;</div><div class="code" style="left:1630px;top:1046px"><span class="y">}</span></div><div class="code" style="left:1630px;top:1082px"></div><div class="code" style="left:1630px;top:1118px"><span class="k">img</span>, <span class="k">picture</span>, <span class="k">video</span>, <span class="k">canvas</span>, <span class="k">svg</span> <span class="y">{</span></div><div class="code" style="left:1630px;top:1154px">    <span class="pr">display</span>: <span class="sv">block</span>;</div><div class="code" style="left:1630px;top:1190px">    <span class="pr">max–width</span>: <span class="n">100%</span>;</div><div class="abs" style="left:2455px;top:665px;width:27px;height:4px;background:#c4c4c4;"></div></div></div>
</body></html>
